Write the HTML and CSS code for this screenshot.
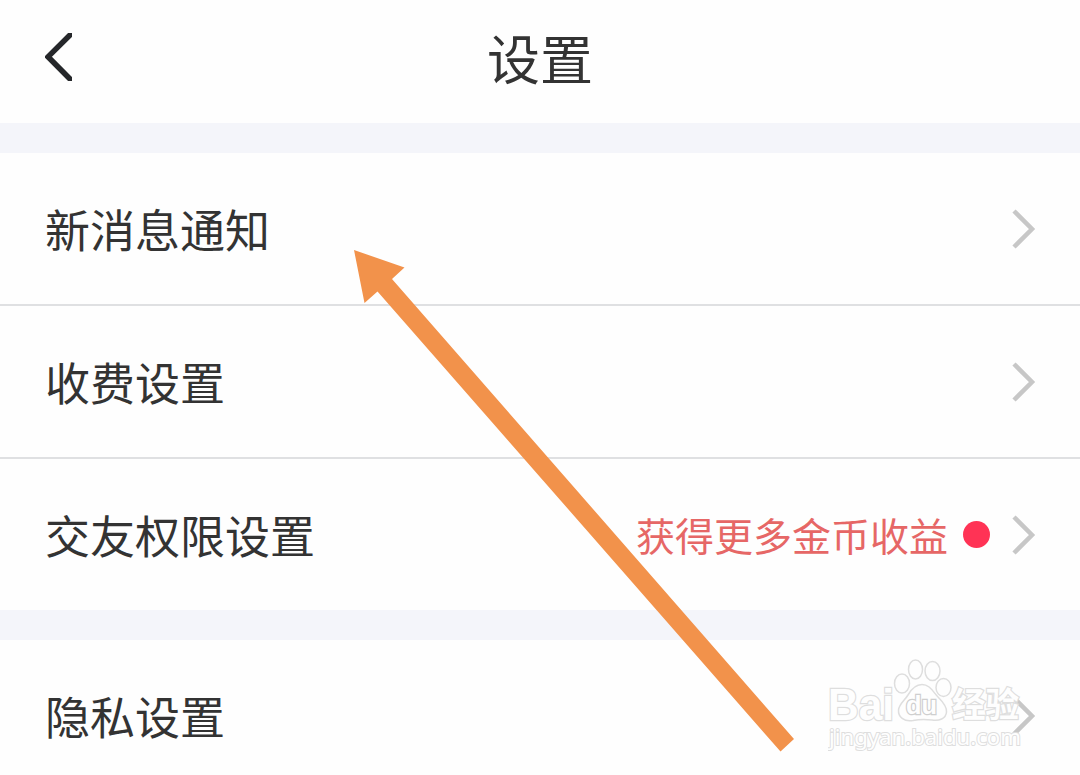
FILE: index.html
```html
<!DOCTYPE html>
<html lang="zh-CN">
<head>
  <meta charset="UTF-8">
  <title>设置</title>
  <link rel="stylesheet" href="styles.css">
</head>
<body>
  <header class="header">
    <svg class="back" viewBox="0 0 27 48">
      <path d="M25 2 L3 23.8 L25 46"/>
    </svg>
    <h1>设置</h1>
  </header>

  <main>
    <section class="group">
      <div class="item">
        <span class="label">新消息通知</span>
        <svg class="chevron" viewBox="0 0 24 40"><path d="M2 2 L20 20 L2 38"/></svg>
      </div>
      <div class="item">
        <span class="label">收费设置</span>
        <svg class="chevron" viewBox="0 0 24 40"><path d="M2 2 L20 20 L2 38"/></svg>
      </div>
      <div class="item">
        <span class="label">交友权限设置</span>
        <span class="hint">获得更多金币收益</span>
        <span class="dot"></span>
        <svg class="chevron" viewBox="0 0 24 40"><path d="M2 2 L20 20 L2 38"/></svg>
      </div>
    </section>

    <section class="group">
      <div class="item">
        <span class="label">隐私设置</span>
        <svg class="chevron" viewBox="0 0 24 40"><path d="M2 2 L20 20 L2 38"/></svg>
      </div>
    </section>
  </main>

  <svg class="arrow" viewBox="0 0 440 502">
    <polygon points="0,0 50.5,17.5 38,29 440,489 426.500,501.500 23.500,41.500 10.500,53"/>
  </svg>

  <svg class="watermark" viewBox="0 0 200 100">
    <text class="brand" x="0" y="64.500" textLength="66" lengthAdjust="spacingAndGlyphs">Bai</text>
    <ellipse cx="74" cy="28.500" rx="7.500" ry="9.500"/>
    <ellipse cx="87.500" cy="14.500" rx="7" ry="9.500"/>
    <ellipse cx="104.500" cy="16" rx="7.500" ry="9.500"/>
    <ellipse cx="115.500" cy="32.500" rx="7.500" ry="9"/>
    <path d="M94 29.500 C102 29.500 105 37 110 42 C116 48 119 52 118.500 57 C118 64 111 66 104 65 C97 64 92 64 85 65.500 C76 67 70 62 70.500 55 C71 49 77 45 80 40 C84 33 88 29.500 94 29.500 Z"/>
    <text class="du" x="78" y="59" textLength="31" lengthAdjust="spacingAndGlyphs">du</text>
    <text class="name" x="124" y="61.500" textLength="67" lengthAdjust="spacingAndGlyphs">经验</text>
    <text class="site" x="1" y="90" textLength="192" lengthAdjust="spacingAndGlyphs">jingyan.baidu.com</text>
  </svg>
</body>
</html>
```

FILE: styles.css
```css
* {
  box-sizing: border-box;
}

body {
  margin: 0;
  height: 775px;
  overflow: hidden;
  background-color: #fefefe;
  color: #333;
  font-family: "Noto Sans CJK SC", sans-serif;
  position: relative;
}

.header {
  height: 123px;
  padding: 0 45px 9px;
  display: grid;
  grid-template-columns: 27px 1fr 27px;
  align-items: center;
}

.header h1 {
  margin: 0;
  font-size: 53px;
  font-weight: 400;
  line-height: 80px;
  text-align: center;
}

.back {
  width: 27px;
  height: 48px;
  fill: none;
  stroke: #25272a;
  stroke-width: 5.5;
  stroke-linecap: round;
}

.group {
  border-top: 30px solid #f4f5fa;
}

.item {
  height: 153px;
  padding: 0 44px 0 45px;
  display: flex;
  align-items: center;
  border-bottom: 2px solid #dfe0e2;
}

.item:last-child {
  height: 151px;
  border-bottom: none;
}

.label {
  flex: 1;
  font-size: 45px;
  line-height: 66px;
}

.hint {
  color: #e66766;
  font-size: 39px;
  line-height: 58px;
  padding-bottom: 2px;
}

.dot {
  width: 27px;
  height: 27px;
  margin: 0 22px 0 15px;
  border-radius: 50%;
  background-color: #ff3355;
}

.chevron {
  width: 24px;
  height: 40px;
  fill: none;
  stroke: #c7c7c7;
  stroke-width: 4.5;
}

.arrow {
  position: absolute;
  left: 354px;
  top: 250px;
  width: 440px;
  height: 502px;
  fill: #f2924b;
}

.watermark {
  position: absolute;
  left: 828px;
  top: 655px;
  width: 200px;
  height: 100px;
  fill: #fefefe;
  stroke: #dedede;
  stroke-width: 1.5;
}

.watermark text {
  font-family: "Liberation Sans", "Noto Sans CJK SC", sans-serif;
  paint-order: stroke;
  stroke-width: 2.5;
}

.watermark .brand {
  font-size: 45px;
  font-weight: bold;
}

.watermark .du {
  font-size: 26px;
  font-weight: bold;
  stroke: #cfcfcf;
}

.watermark .name {
  font-size: 34px;
  font-weight: bold;
}

.watermark .site {
  font-family: "Noto Sans", sans-serif;
  font-size: 22px;
  stroke-width: 2;
}
```
